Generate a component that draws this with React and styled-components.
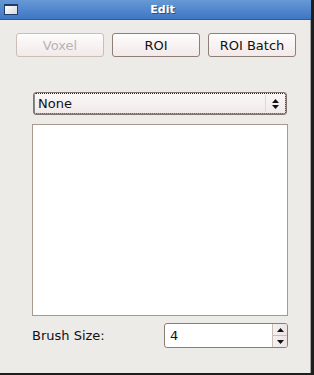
import React from "react";
import styled, { createGlobalStyle } from "styled-components";

const Global = createGlobalStyle`
  html, body { margin: 0; padding: 0; background: #1c1c1c; }
  body { font-family: "DejaVu Sans", "Liberation Sans", sans-serif; }
`;

// *************************************
// WINDOW FRAME
// *************************************

const Frame = styled.div`
  width: 314px;
  height: 375px;
  display: flex;
  flex-direction: column;
  box-sizing: border-box;
  border-right: 3px solid #1e1e1e;
  border-bottom: 2px solid #1e1e1e;
  background: #edebe8;
  overflow: hidden;
`;

const TitleBar = styled.div`
  height: 20px;
  flex: none;
  position: relative;
  display: flex;
  align-items: center;
  justify-content: center;
  background: linear-gradient(#6699d6, #3f76c4);
  border-bottom: 1px solid #2d5a9a;
  box-sizing: border-box;
`;

const WinIcon = styled.div`
  position: absolute;
  left: 4px;
  top: 4px;
  width: 12px;
  height: 8px;
  border: 1px solid #1d3d6a;
  border-top-width: 2px;
  background: linear-gradient(135deg, #ffffff, #d8d8e0);
`;

const Title = styled.span`
  color: #ffffff;
  font-size: 11px;
  font-weight: bold;
  text-shadow: 1px 1px 0 #2a4f86;
  margin-left: 14px;
`;

const Body = styled.div`
  flex: 1;
  display: flex;
  flex-direction: column;
  padding: 13px 0 0 0;
  border-right: 1px solid #a8a6a2;
`;

// *************************************
// BUTTONS
// *************************************

const ButtonRow = styled.div`
  display: flex;
  gap: 8px;
  padding-left: 16px;
`;

const Button = styled.button`
  width: 88px;
  height: 24px;
  box-sizing: border-box;
  border: 1px solid ${({ disabled }) => (disabled ? "#cbbdb8" : "#8d7e77")};
  border-radius: 3px;
  background: linear-gradient(#fefcfc, #f3e9e9);
  color: ${({ disabled }) => (disabled ? "#b9b2b2" : "#111")};
  font-family: "DejaVu Sans", sans-serif;
  font-size: 13px;
  padding: 0;
`;

// *************************************
// COMBO + LIST
// *************************************

const Content = styled.div`
  display: flex;
  flex-direction: column;
  padding: 0 22px 0 32px;
  margin-top: 35px;
`;

const Combo = styled.div`
  height: 23px;
  margin: 0 1px;
  box-sizing: border-box;
  display: flex;
  align-items: center;
  border: 1px solid #7f756e;
  border-radius: 3px;
  background: linear-gradient(#fbf8f8, #f1e9e9);
  outline: 1px dotted #222;
  outline-offset: -2px;
  font-size: 13px;
  color: #111;
`;

const ComboText = styled.span`
  flex: 1;
  padding-left: 4px;
`;

const ComboArrow = styled.div`
  width: 18px;
  height: 17px;
  display: flex;
  align-items: center;
  justify-content: center;
  border-left: 1px solid #e0d8d6;
  margin-right: 2px;
`;

const ListBox = styled.div`
  margin-top: 9px;
  height: 192px;
  box-sizing: border-box;
  border: 1px solid #a8998c;
  background: #ffffff;
`;

// *************************************
// BRUSH SIZE
// *************************************

const BrushRow = styled.div`
  display: flex;
  align-items: center;
  justify-content: space-between;
  margin-top: 7px;
`;

const Label = styled.span`
  font-size: 13px;
  color: #111;
`;

const Spin = styled.div`
  width: 124px;
  height: 25px;
  box-sizing: border-box;
  display: flex;
  border: 1px solid #8d7e72;
  border-radius: 3px;
  background: #fff;
  overflow: hidden;
`;

const SpinValue = styled.span`
  flex: 1;
  font-size: 13px;
  padding: 4px 0 0 5px;
  color: #111;
`;

const SpinButtons = styled.div`
  width: 14px;
  display: flex;
  flex-direction: column;
  border-left: 1px solid #c9beb8;
  background: linear-gradient(90deg, #f6f1f1, #ece4e4);
`;

const SpinBtn = styled.div`
  flex: 1;
  display: flex;
  align-items: center;
  justify-content: center;
  border-top: ${({ $lower }) => ($lower ? "1px solid #c9beb8" : "none")};
`;

const Tri = ({ up }) => (
  <svg width="7" height="4" viewBox="0 0 7 4">
    <path d={up ? "M0 4 L3.5 0 L7 4 Z" : "M0 0 L3.5 4 L7 0 Z"} fill="#111" />
  </svg>
);

export default function App() {
  return (
    <>
      <Global />
      <Frame>
        <TitleBar>
          <WinIcon />
          <Title>Edit</Title>
        </TitleBar>
        <Body>
          <ButtonRow>
            <Button disabled>Voxel</Button>
            <Button>ROI</Button>
            <Button>ROI Batch</Button>
          </ButtonRow>

          <Content>
            <Combo>
              <ComboText>None</ComboText>
              <ComboArrow>
                <svg width="7" height="10" viewBox="0 0 7 10">
                  <path d="M0 4 L3.5 0 L7 4 Z M0 6 L3.5 10 L7 6 Z" fill="#111" />
                </svg>
              </ComboArrow>
            </Combo>
            <ListBox />
            <BrushRow>
              <Label>Brush Size:</Label>
              <Spin>
                <SpinValue>4</SpinValue>
                <SpinButtons>
                  <SpinBtn>
                    <Tri up />
                  </SpinBtn>
                  <SpinBtn $lower>
                    <Tri />
                  </SpinBtn>
                </SpinButtons>
              </Spin>
            </BrushRow>
          </Content>
        </Body>
      </Frame>
    </>
  );
}
